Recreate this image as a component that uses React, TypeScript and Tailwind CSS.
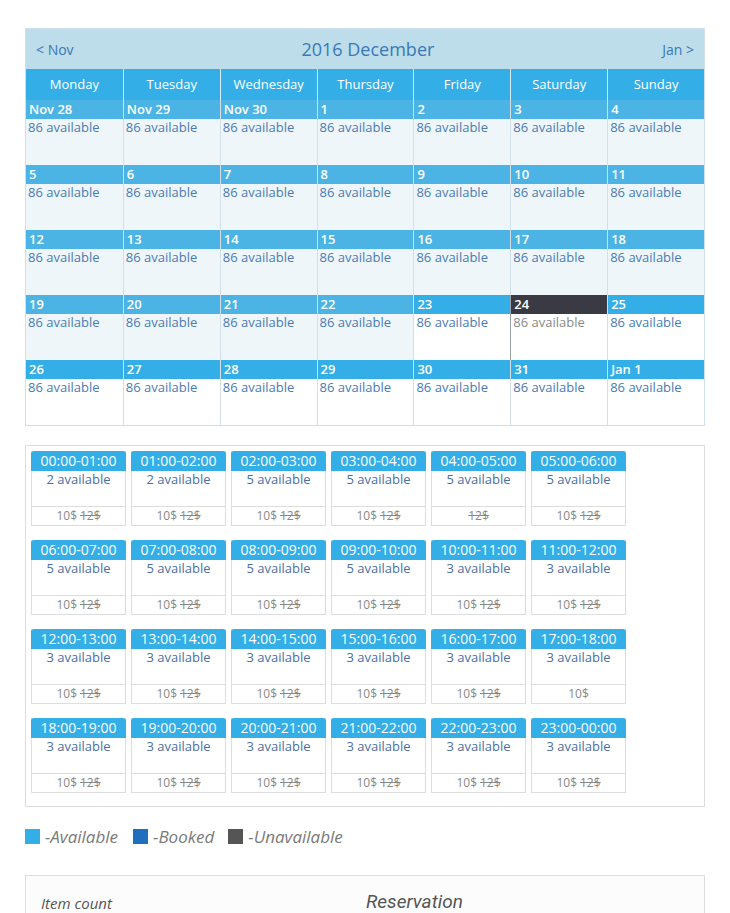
import React from 'react';

type Day = { label: string; past: boolean; today?: boolean };

const dayNames = ['Monday', 'Tuesday', 'Wednesday', 'Thursday', 'Friday', 'Saturday', 'Sunday'];

function buildWeeks(): Day[][] {
  const labels = ['Nov 28', 'Nov 29', 'Nov 30'];
  for (let d = 1; d <= 31; d++) labels.push(String(d));
  labels.push('Jan 1');
  const days: Day[] = labels.map((label, i) => ({
    label,
    past: i < 25,
    today: label === '24',
  }));
  const weeks: Day[][] = [];
  for (let i = 0; i < days.length; i += 7) weeks.push(days.slice(i, i + 7));
  return weeks;
}

const slots = [
  { time: '00:00-01:00', avail: 2, price: '10$', old: '12$' },
  { time: '01:00-02:00', avail: 2, price: '10$', old: '12$' },
  { time: '02:00-03:00', avail: 5, price: '10$', old: '12$' },
  { time: '03:00-04:00', avail: 5, price: '10$', old: '12$' },
  { time: '04:00-05:00', avail: 5, price: '', old: '12$' },
  { time: '05:00-06:00', avail: 5, price: '10$', old: '12$' },
  { time: '06:00-07:00', avail: 5, price: '10$', old: '12$' },
  { time: '07:00-08:00', avail: 5, price: '10$', old: '12$' },
  { time: '08:00-09:00', avail: 5, price: '10$', old: '12$' },
  { time: '09:00-10:00', avail: 5, price: '10$', old: '12$' },
  { time: '10:00-11:00', avail: 3, price: '10$', old: '12$' },
  { time: '11:00-12:00', avail: 3, price: '10$', old: '12$' },
  { time: '12:00-13:00', avail: 3, price: '10$', old: '12$' },
  { time: '13:00-14:00', avail: 3, price: '10$', old: '12$' },
  { time: '14:00-15:00', avail: 3, price: '10$', old: '12$' },
  { time: '15:00-16:00', avail: 3, price: '10$', old: '12$' },
  { time: '16:00-17:00', avail: 3, price: '10$', old: '12$' },
  { time: '17:00-18:00', avail: 3, price: '10$', old: '' },
  { time: '18:00-19:00', avail: 3, price: '10$', old: '12$' },
  { time: '19:00-20:00', avail: 3, price: '10$', old: '12$' },
  { time: '20:00-21:00', avail: 3, price: '10$', old: '12$' },
  { time: '21:00-22:00', avail: 3, price: '10$', old: '12$' },
  { time: '22:00-23:00', avail: 3, price: '10$', old: '12$' },
  { time: '23:00-00:00', avail: 3, price: '10$', old: '12$' },
];

export default function App() {
  const weeks = buildWeeks();

  return (
    <div className="min-h-[913px] bg-white pl-[25px] pr-[25px] pt-[28px] font-['Open_Sans',sans-serif]">
      {/* Calendar */}
      <div className="w-[680px] border border-[#cfe0ea]">
        <div className="flex h-[40px] items-center justify-between bg-[#bcdde9] px-[10px] text-[#3b78b6]">
          <span className="text-[14px]">&lt; Nov</span>
          <span className="text-[18px]">2016 December</span>
          <span className="text-[14px]">Jan &gt;</span>
        </div>
        <div className="grid grid-cols-7 bg-[#34aee6]">
          {dayNames.map((n, i) => (
            <div
              key={n}
              className={`flex h-[31px] items-center justify-center text-[13px] text-white ${i > 0 ? 'border-l border-[#d6ecf8]' : ''}`}
            >
              {n}
            </div>
          ))}
        </div>
        {weeks.map((week, wi) => (
          <div key={wi} className="grid grid-cols-7">
            {week.map((d, di) => (
              <div
                key={d.label}
                className={`flex h-[65px] flex-col ${di > 0 ? (d.today ? 'border-l border-[#9aa0a6]' : 'border-l border-[#d3dfe7]') : ''} ${d.past ? 'bg-[#eff6fa]' : 'bg-white'}`}
              >
                <div
                  className={`h-[19px] pl-[3px] text-[13px] font-semibold leading-[19px] text-white ${d.today ? 'bg-[#393a44]' : d.past ? 'bg-[#4bb4e5]' : 'bg-[#34aee6]'}`}
                >
                  {d.label}
                </div>
                <div className={`pl-[2px] text-[13px] leading-[17px] ${d.today ? 'text-[#8a8a8a]' : 'text-[#4a7bb5]'}`}>
                  86 available
                </div>
              </div>
            ))}
          </div>
        ))}
      </div>

      {/* Time slots */}
      <div className="mt-[19px] w-[680px] border border-[#dddddd] px-[5px] pb-[13px] pt-[5px]">
        <div className="grid grid-cols-[repeat(6,95px)] gap-x-[5px] gap-y-[14px]">
          {slots.map((s) => (
            <div key={s.time} className="flex h-[75px] flex-col border border-[#dddddd] border-t-0">
              <div className="-mx-px h-[20px] rounded-t-[3px] bg-[#34aee6] text-center text-[14px] leading-[20px] text-white">
                {s.time}
              </div>
              <div className="h-[35px] text-center text-[13px] leading-[16px] text-[#4a6fa5]">
                {s.avail} available
              </div>
              <div className="flex flex-1 items-center justify-center gap-[3px] border-t border-[#dddddd] text-[12px] text-[#888888]">
                {s.price && <span>{s.price}</span>}
                {s.old && <span className="line-through">{s.old}</span>}
              </div>
            </div>
          ))}
        </div>
      </div>

      {/* Legend */}
      <div className="mt-[17px] flex items-center text-[17px] italic text-[#7a7a7a]">
        <span className="mr-[5px] h-[15px] w-[15px] bg-[#34aee6]" />
        <span className="mr-[15px]">-Available</span>
        <span className="mr-[5px] h-[15px] w-[15px] bg-[#1f6fbd]" />
        <span className="mr-[14px]">-Booked</span>
        <span className="mr-[5px] h-[15px] w-[15px] bg-[#555555]" />
        <span>-Unavailable</span>
      </div>

      {/* Reservation */}
      <div className="mt-[25px] flex h-[60px] w-[680px] items-start border border-[#dddddd] bg-[#fcfcfc] pt-[12px]">
        <div className="w-[340px] pl-[15px] pt-[4px] text-[15px] italic text-[#555555]">Item count</div>
        <div className="font-['Roboto',sans-serif] text-[19px] italic text-[#555555]">Reservation</div>
      </div>
    </div>
  );
}
